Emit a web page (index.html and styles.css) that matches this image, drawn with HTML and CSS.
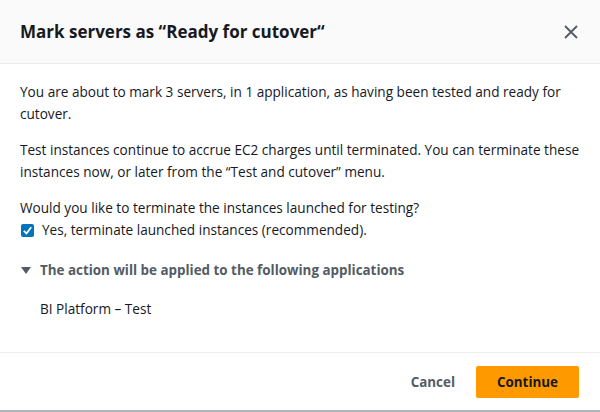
FILE: index.html
```html
<!DOCTYPE html>
<html>
<head>
<meta charset="utf-8">
<link rel="stylesheet" href="styles.css">
</head>
<body>
<div class="modal">
  <div class="header">
    <h2 class="title">Mark servers as “Ready for cutover“</h2>
    <button class="close" aria-label="Close">
      <svg width="16" height="16" viewBox="0 0 16 16"><path d="M2 2 L14 14 M14 2 L2 14" stroke="#545b64" stroke-width="1.8" fill="none"/></svg>
    </button>
  </div>
  <div class="body">
    <p class="para">You are about to mark 3 servers, in 1 application, as having been tested and ready for cutover.</p>
    <p class="para">Test instances continue to accrue EC2 charges until terminated. You can terminate these instances now, or later from the “Test and cutover” menu.</p>
    <div class="question">
      <div class="qtext">Would you like to terminate the instances launched for testing?</div>
      <label class="check">
        <span class="box"><svg width="13" height="13" viewBox="0 0 13 13"><path d="M2.8 6.8 L5.5 9.5 L10.2 3.3" stroke="#fff" stroke-width="1.8" fill="none"/></svg></span>
        <span>Yes, terminate launched instances (recommended).</span>
      </label>
    </div>
    <div class="expander">
      <span class="caret"></span>
      <span>The action will be applied to the following applications</span>
    </div>
    <div class="app">BI Platform – Test</div>
  </div>
  <div class="footer">
    <button class="btn-link">Cancel</button>
    <button class="btn-primary">Continue</button>
  </div>
</div>
</body>
</html>
```
FILE: styles.css
```css
html, body { margin: 0; padding: 0; }
body {
  font-family: "Open Sans", "Liberation Sans", sans-serif;
  color: #16191f;
  background: #fff;
  width: 600px;
  height: 412px;
  overflow: hidden;
}
.modal {
  height: 410px;
  display: flex;
  flex-direction: column;
  border-bottom: 2px solid #aab7b8;
}
.header {
  height: 64px;
  flex: none;
  box-sizing: border-box;
  background: #fafafa;
  border-bottom: 1px solid #eaeded;
  display: flex;
  align-items: center;
  justify-content: space-between;
  padding: 0 21px 0 20px;
}
.title {
  margin: 0;
  font-size: 17px;
  font-weight: 700;
}
.close {
  border: 0; background: none; padding: 0;
  width: 16px; height: 16px; display: flex;
}
.body {
  flex: 1;
  padding: 17px 20px 0 20px;
  font-size: 13.6px;
  line-height: 22px;
  border-bottom: 1px solid #eaeded;
}
.para { margin: 0 0 14px 0; }
.check { display: flex; align-items: center; gap: 8px; }
.box {
  width: 13px; height: 13px; background: #0073bb; border-radius: 2px;
  display: flex; margin-left: 1px;
}
.expander {
  margin-top: 18px;
  display: flex; align-items: center; gap: 9px;
  font-size: 13.4px;
  font-weight: 700; color: #545b64;
}
.caret {
  width: 0; height: 0;
  border-left: 5px solid transparent;
  border-right: 5px solid transparent;
  border-top: 7px solid #545b64;
  margin-left: 1px;
}
.app { margin-top: 17px; padding-left: 20px; }
.footer {
  height: 57px;
  flex: none;
  display: flex;
  justify-content: flex-end;
  align-items: center;
  gap: 21px;
  padding: 0 21px 0 20px;
}
.btn-link {
  border: 0; background: none; font-family: "Open Sans", sans-serif;
  font-size: 13.4px; font-weight: 700; color: #545b64; padding: 0;
}
.btn-primary {
  border: 0; background: #ff9900; border-radius: 2px;
  font-family: "Open Sans", sans-serif;
  font-size: 13.4px; font-weight: 700; color: #16191f;
  width: 103px; height: 32px;
}
```
